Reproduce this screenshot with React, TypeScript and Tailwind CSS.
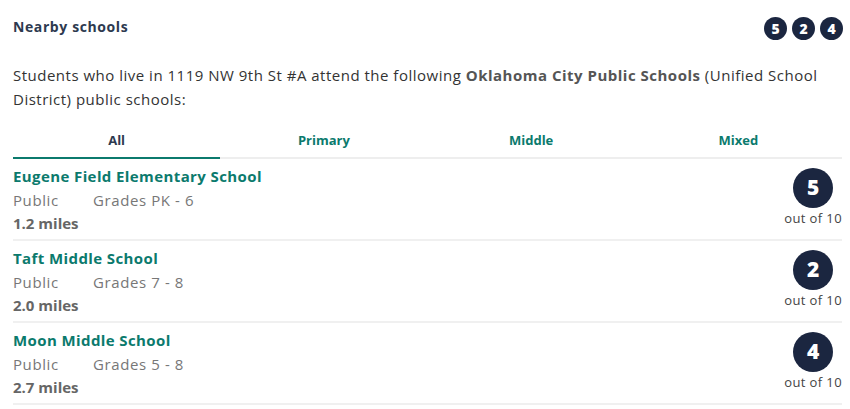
import React, { useState } from "react";

type School = { name: string; type: string; grades: string; distance: string; rating: number };

const schools: School[] = [
   { name: "Eugene Field Elementary School", type: "Public", grades: "Grades PK - 6", distance: "1.2 miles", rating: 5 },
   { name: "Taft Middle School", type: "Public", grades: "Grades 7 - 8", distance: "2.0 miles", rating: 2 },
   { name: "Moon Middle School", type: "Public", grades: "Grades 5 - 8", distance: "2.7 miles", rating: 4 },
];

const tabs = ["All", "Primary", "Middle", "Mixed"];

export default function App() {
   const [active, setActive] = useState("All");

   return (
      <div className="bg-white w-[850px] h-[409px] px-[13px] pr-[4px] pt-[15px] text-[#333] font-['Open_Sans','Liberation_Sans',sans-serif]">
         {/* Header */}
         <div className="flex items-start justify-between">
            <h2 className="text-[14px] font-bold tracking-[0.6px] text-[#2d3a4f] leading-[24px]">Nearby schools</h2>
            <div className="flex gap-[5px] pt-[2px] pr-[3px]">
               {schools.map((s) => (
                  <span
                     key={s.name}
                     className="w-[23px] h-[23px] rounded-full bg-[#1b2640] text-white text-[14px] font-extrabold flex items-center justify-center"
                  >
                     {s.rating}
                  </span>
               ))}
            </div>
         </div>

         <p className="mt-[23px] text-[15px] tracking-[0.5px] leading-[24px] text-[#333] pr-[4px]">
            Students who live in 1119 NW 9th St #A attend the following <b className="text-[#555]">Oklahoma City Public Schools</b>{" "}
            (Unified School District) public schools:
         </p>

         {/* Tabs */}
         <div className="mt-[14px] mr-[4px] grid grid-cols-4 border-b-2 border-[#eeeeee]">
            {tabs.map((tab) => (
               <button
                  key={tab}
                  onClick={() => setActive(tab)}
                  className={
                     tab === active
                        ? "h-[34px] -mb-[2px] border-b-2 border-[#0b7a6d] text-[13px] font-bold text-[#2d3a4f]"
                        : "h-[32px] text-[13px] font-bold text-[#0b7a6d]"
                  }
               >
                  {tab}
               </button>
            ))}
         </div>

         {/* Schools */}
         <div className="mr-[4px]">
            {schools.map((s) => (
               <div key={s.name} className="flex justify-between border-b-2 border-[#f0f0f0] h-[82px] pt-[6px]">
                  <div className="flex flex-col">
                     <span className="text-[15px] font-bold tracking-[0.4px] text-[#0b7a6d] leading-[22px]">{s.name}</span>
                     <div className="flex text-[15px] tracking-[0.6px] text-[#777] leading-[26px]">
                        <span className="w-[80px]">{s.type}</span>
                        <span>{s.grades}</span>
                     </div>
                     <span className="text-[15px] font-bold text-[#666] leading-[20px]">{s.distance}</span>
                  </div>
                  <div className="flex flex-col items-center pt-[3px]">
                     <span className="w-[40px] h-[40px] rounded-full bg-[#1b2640] text-white text-[21px] font-extrabold flex items-center justify-center">
                        {s.rating}
                     </span>
                     <span className="text-[13px] tracking-[0.4px] text-[#444] leading-[20px]">out of 10</span>
                  </div>
               </div>
            ))}
         </div>
      </div>
   );
}
